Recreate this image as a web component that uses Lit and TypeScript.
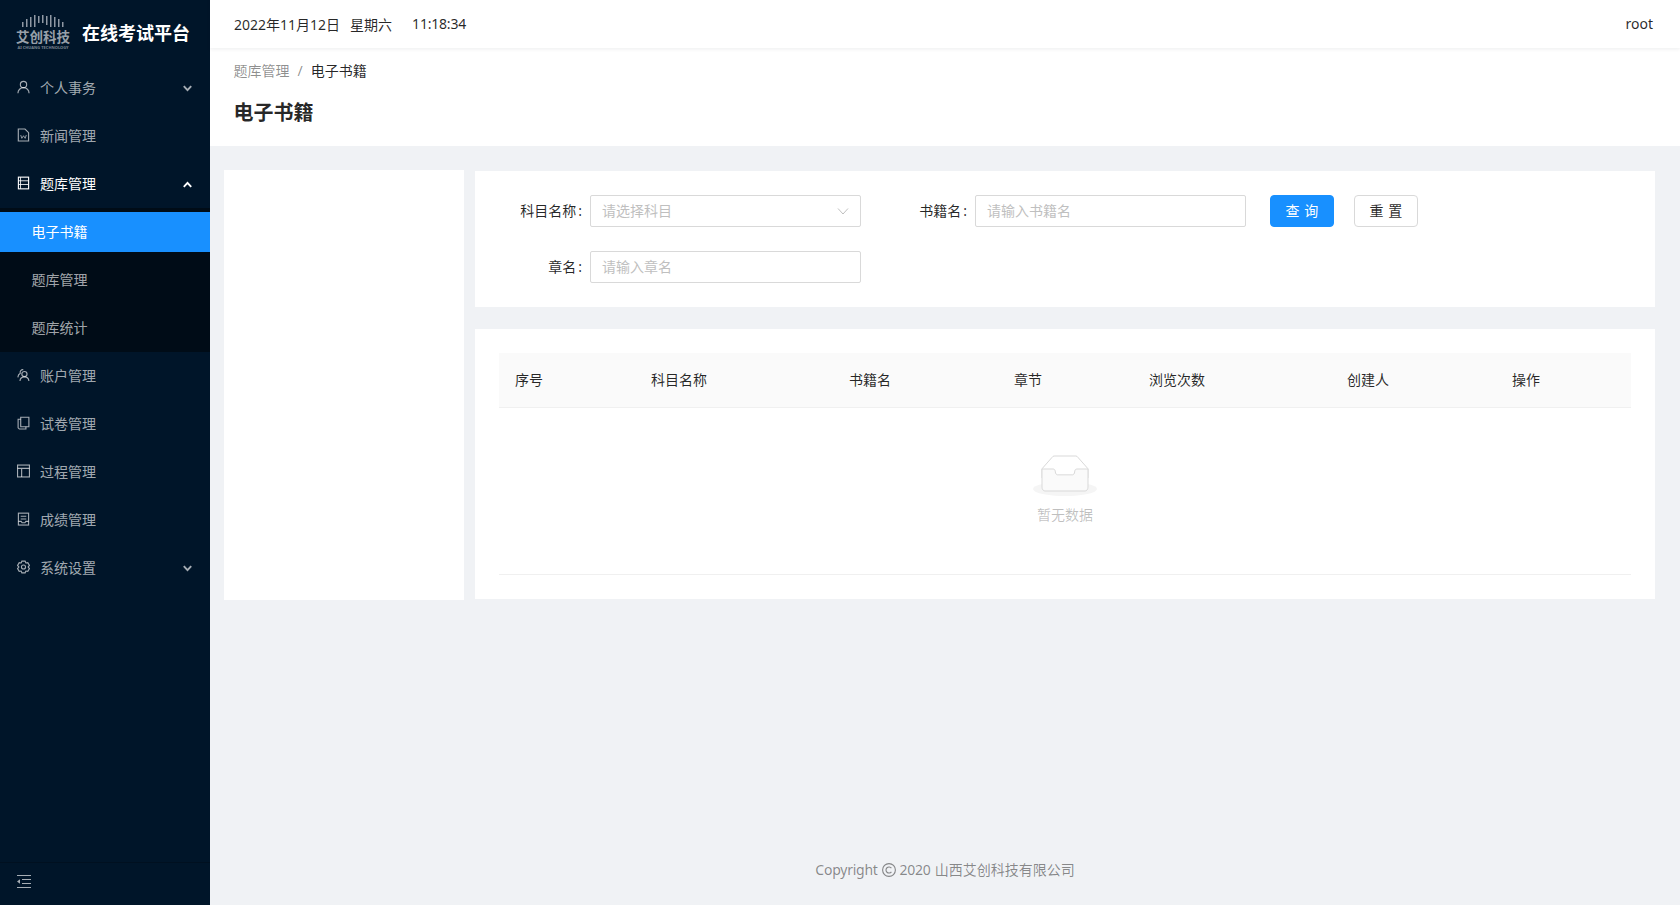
import { LitElement, html, css, svg } from "lit";
import { customElement } from "lit/decorators.js";

const gearPath = (() => {
  const pts: string[] = [];
  const cx = 7, cy = 7;
  for (let i = 0; i < 6; i++) {
    const a = (i * Math.PI) / 3 - Math.PI / 2;
    const w = 0.27;
    const out = 6.6, inn = 5;
    const p = (r: number, t: number) => `${(cx + r * Math.cos(t)).toFixed(2)} ${(cy + r * Math.sin(t)).toFixed(2)}`;
    pts.push(p(inn, a - 0.52), p(out, a - w), p(out, a + w), p(inn, a + 0.52));
  }
  return "M" + pts.join("L") + "Z";
})();

const icons: Record<string, unknown> = {
  user: svg`<circle cx="7" cy="4.3" r="3.4"/><path d="M1 13.6c0-3.3 2.7-5.9 6-5.9s6 2.6 6 5.9"/>`,
  word: svg`<path d="M1.4.6h7.2l3.9 3.9v8.9H1.4z"/><path d="M4 7l1.2 3.6L7 7.8l1.8 2.8L10 7" stroke-width=".9"/>`,
  book: svg`<rect x="1.500" y=".7" width="11" height="12.6"/><path d="M1.500 4.600h11M1.500 8.600h11M3.800.7v12.600" stroke-width=".9"/>`,
  account: svg`<circle cx="8" cy="6" r="2.8"/><path d="M3.2 13.4c.2-2.6 2.2-4.4 4.8-4.4s4.600 1.800 4.800 4.400"/><path d="M6.800 1.300a3 3 0 0 0-3.300 3.900c-1.400.9-2.400 2.500-2.600 4.300"/>`,
  paper: svg`<path d="M4 3H1.200v9.200l1.300 1.300H9.600V11"/><path d="M4 3V.800h8.800V11H4z"/>`,
  process: svg`<rect x=".6" y=".6" width="12.800" height="12.800"/><path d="M.6 4.200h12.800M5 4.200v9.200"/>`,
  score: svg`<rect x="1.500" y=".700" width="11" height="12.800"/><path d="M4 4h6M4 7h6M1.500 9.500h3l1 1.500h3l1-1.500h3"/>`,
  gear: svg`<path d="${gearPath}"/><circle cx="7" cy="7" r="2.200"/>`,
};

const menu = [
  { t: "个人事务", i: "user", arrow: "down" },
  { t: "新闻管理", i: "word" },
  { t: "题库管理", i: "book", arrow: "up", active: true },
  { sub: [{ t: "电子书籍", sel: true }, { t: "题库管理" }, { t: "题库统计" }] },
  { t: "账户管理", i: "account" },
  { t: "试卷管理", i: "paper" },
  { t: "过程管理", i: "process" },
  { t: "成绩管理", i: "score" },
  { t: "系统设置", i: "gear", arrow: "down" },
] as any[];

// [x, top, bottom] of each bar in the logo, in px
const bars = [
  [1, 8, 13], [5, 5, 13], [9, 3, 13], [13, 1, 13], [17, 2, 9], [21, 1, 9],
  [25, 2, 11], [29, 1, 13], [33, 3, 13], [37, 5, 13], [41, 8, 13],
];

@customElement("app-root")
export class AppRoot extends LitElement {
  static styles = css`
    :host {
      display: flex;
      width: 100%;
      height: 100vh;
      overflow: hidden;
      background: #f0f2f5;
      font-family: "Noto Sans", "Noto Sans CJK SC", sans-serif;
      font-size: 14px;
      color: rgba(0, 0, 0, 0.85);
    }
    * { box-sizing: border-box; }
    .side {
      width: 210px;
      flex: none;
      background: #001529;
      display: flex;
      flex-direction: column;
      color: rgba(255, 255, 255, 0.65);
    }
    .brand {
      height: 64px;
      flex: none;
      display: flex;
      align-items: center;
      padding: 0 0 0 16px;
      gap: 12px;
    }
    .logo {
      width: 54px;
      display: flex;
      flex-direction: column;
      align-items: center;
      color: #98a0a9;
    }
    .logo svg { display: block; }
    .logo-cn {
      font-size: 13.500px;
      line-height: 12px;
      font-weight: 700;
      white-space: nowrap;
      margin-top: 3px;
    }
    .logo-en {
      font-size: 4px;
      line-height: 5px;
      white-space: nowrap;
      font-weight: 700;
      opacity: 0.8;
      margin-top: 2px;
    }
    .brand-title {
      font-size: 18px;
      font-weight: 700;
      color: #fff;
      white-space: nowrap;
    }
    .nav { flex: 1; }
    .item {
      height: 48px;
      display: flex;
      align-items: center;
      padding: 0 0 2px 17px;
    }
    .item.active { color: #fff; }
    .item svg.ic {
      width: 13px;
      height: 14px;
      flex: none;
      margin-right: 10px;
      fill: none;
      stroke: currentColor;
      stroke-width: 1.200;
    }
    .arrow {
      width: 9px;
      height: 7px;
      margin: 2px 18.500px 0 auto;
      fill: none;
      stroke: currentColor;
      stroke-width: 1.900;
    }
    .sub { background: #000c17; padding: 4px 0; }
    .sub-item {
      height: 40px;
      display: flex;
      align-items: center;
      padding: 0 0 2px 31.5px;
      margin-bottom: 8px;
    }
    .sub-item:last-child { margin-bottom: 0; }
    .sub-item.sel { background: #1890ff; color: #fff; }
    .collapse {
      height: 43px;
      flex: none;
      border-top: 1px solid rgba(0, 0, 0, 0.22);
      display: flex;
      align-items: flex-start;
      padding: 12px 0 0 17px;
      color: rgba(255, 255, 255, 0.65);
    }
    .collapse svg { display: block; }
    .main {
      flex: 1;
      min-width: 0;
      display: flex;
      flex-direction: column;
    }
    .top {
      height: 48px;
      flex: none;
      background: #fff;
      box-shadow: 0 1px 4px rgba(0, 21, 41, 0.08);
      display: flex;
      align-items: center;
      padding: 0 27px 1px 24px;
      position: relative;
      z-index: 1;
    }
    .top-date { margin-right: 10px; }
    .top-week { margin-right: 20px; }
    .top-time { letter-spacing: -0.2px; }
    .top-user { margin-left: auto; }
    .page-head {
      height: 98px;
      flex: none;
      background: #fff;
      padding: 12px 24px 0 23.500px;
    }
    .crumb { display: flex; line-height: 22px; }
    .crumb .link { color: rgba(0, 0, 0, 0.45); }
    .crumb .sep { color: rgba(0, 0, 0, 0.45); margin: 0 8px; }
    .title {
      margin: 15px 0 0;
      font-size: 20px;
      line-height: 32px;
      font-weight: 700;
    }
    .body {
      flex: 1;
      display: flex;
      align-items: flex-start;
      padding: 24px 25px 0 14px;
      gap: 11px;
    }
    .tree { width: 240px; height: 430px; flex: none; background: #fff; }
    .right {
      flex: 1;
      min-width: 0;
      display: flex;
      flex-direction: column;
      gap: 22px;
      margin-top: 1px;
    }
    .form {
      background: #fff;
      padding: 24px 0;
      display: grid;
      grid-template-columns: 115px 271px 114px 271px 64px 64px;
      grid-auto-rows: 32px;
      row-gap: 24px;
      align-items: center;
    }
    .label { text-align: right; padding: 0 8px 2px 0; white-space: nowrap; }
    .label i { font-style: normal; margin-left: 2px; }
    .field {
      height: 32px;
      border: 1px solid #d9d9d9;
      border-radius: 2px;
      padding: 0 11px 2px;
      display: flex;
      align-items: center;
      justify-content: space-between;
      color: #bfbfbf;
      background: #fff;
    }
    .field svg { fill: none; stroke: rgba(0, 0, 0, 0.25); stroke-width: 1; margin-top: 2px; }
    .btn {
      height: 32px;
      border-radius: 4px;
      border: 1px solid #d9d9d9;
      display: flex;
      align-items: center;
      justify-content: center;
      background: #fff;
      padding-bottom: 2px;
    }
    .btn span { letter-spacing: 0.34em; margin-right: -0.34em; }
    .btn.primary {
      background: #1890ff;
      border-color: #1890ff;
      color: #fff;
      margin-left: 24px;
      width: 64px;
    }
    .btn.reset { width: 64px; margin-left: 44px; }
    .table-card {
      background: #fff;
      height: 270px;
      padding: 24px 24px 0;
    }
    .thead {
      height: 55px;
      background: #fafafa;
      border-bottom: 1px solid #f0f0f0;
      display: grid;
      grid-template-columns: 136px 198px 165px 135px 198px 165px 135px;
      align-items: center;
      padding-bottom: 3px;
    }
    .thead div { padding-left: 16px; }
    .empty {
      height: 167px;
      border-bottom: 1px solid #f0f0f0;
      display: flex;
      flex-direction: column;
      align-items: center;
      padding-top: 47px;
      color: rgba(0, 0, 0, 0.25);
    }
    .empty svg { display: block; }
    .empty-text { line-height: 22px; margin-top: 8px; }
    .foot {
      margin: 0 0 24px;
      flex: none;
      display: flex;
      justify-content: center;
      align-items: center;
      gap: 4px;
      line-height: 22px;
      color: rgba(0, 0, 0, 0.45);
    }
    .foot .latin { letter-spacing: -0.25px; }
    .foot svg { fill: none; stroke: currentColor; stroke-width: 1.100; display: block; }
  `;

  private renderArrow(dir: string) {
    return html`<svg class="arrow" viewBox="0 0 9 7"><path d=${dir === "up" ? "M.8 5.800L4.500 1.800 8.200 5.800" : "M.8 1.200L4.500 5.200 8.200 1.200"} /></svg>`;
  }

  private renderMenu(m: any) {
    if (m.sub) {
      return html`<div class="sub">
        ${m.sub.map((s: any) => html`<div class="sub-item ${s.sel ? "sel" : ""}">${s.t}</div>`)}
      </div>`;
    }
    return html`<div class="item ${m.active ? "active" : ""}">
      <svg class="ic" viewBox="0 0 14 14">${icons[m.i]}</svg>
      <span>${m.t}</span>
      ${m.arrow ? this.renderArrow(m.arrow) : ""}
    </div>`;
  }

  render() {
    return html`
      <aside class="side">
        <div class="brand">
          <div class="logo">
            <svg width="44" height="14" viewBox="0 0 44 14" fill="#8f98a3">
              ${bars.map(([x, a, b]) => svg`<rect x=${x} y=${a} width="1.500" height=${b - a} />`)}
            </svg>
            <div class="logo-cn">艾创科技</div>
            <div class="logo-en">AI CHUANG TECHNOLOGY</div>
          </div>
          <div class="brand-title">在线考试平台</div>
        </div>
        <nav class="nav">${menu.map((m) => this.renderMenu(m))}</nav>
        <div class="collapse">
          <svg width="14" height="14" viewBox="0 0 14 14" fill="currentColor">
            <rect x="0" y="0" width="14" height="1" />
            <rect x="5" y="4" width="9" height="1" />
            <rect x="5" y="8" width="9" height="1" />
            <rect x="0" y="12" width="14" height="1" />
            <path d="M3 4.200v4.600L0 6.500z" />
          </svg>
        </div>
      </aside>
      <div class="main">
        <header class="top">
          <span class="top-date">2022年11月12日</span>
          <span class="top-week">星期六</span>
          <span class="top-time">11:18:34</span>
          <span class="top-user">root</span>
        </header>
        <section class="page-head">
          <div class="crumb">
            <span class="link">题库管理</span><span class="sep">/</span><span>电子书籍</span>
          </div>
          <h1 class="title">电子书籍</h1>
        </section>
        <div class="body">
          <div class="tree"></div>
          <div class="right">
            <div class="form">
              <div class="label">科目名称<i>:</i></div>
              <div class="field">
                <span>请选择科目</span>
                <svg width="12" height="12" viewBox="0 0 12 12"><path d="M1 3.500l5 5.500 5-5.500" /></svg>
              </div>
              <div class="label">书籍名<i>:</i></div>
              <div class="field"><span>请输入书籍名</span></div>
              <div class="btn primary"><span>查询</span></div>
              <div class="btn reset"><span>重置</span></div>
              <div class="label">章名<i>:</i></div>
              <div class="field"><span>请输入章名</span></div>
            </div>
            <div class="table-card">
              <div class="thead">
                ${["序号", "科目名称", "书籍名", "章节", "浏览次数", "创建人", "操作"].map((c) => html`<div>${c}</div>`)}
              </div>
              <div class="empty">
                <svg width="64" height="41" viewBox="0 0 64 41">
                  <g transform="translate(0 1)" fill="none" fill-rule="evenodd">
                    <ellipse fill="#f5f5f5" cx="32" cy="33" rx="32" ry="7" />
                    <g fill-rule="nonzero" stroke="#d9d9d9">
                      <path d="M55 12.760L44.854 1.258C44.367.474 43.656 0 42.907 0H21.093c-.749 0-1.460.474-1.947 1.257L9 12.761V22h46v-9.240z" />
                      <path d="M41.613 15.931c0-1.605.994-2.930 2.227-2.931H55v18.137C55 33.260 53.680 35 52.050 35h-40.100C10.320 35 9 33.259 9 31.137V13h11.160c1.233 0 2.227 1.323 2.227 2.928v.022c0 1.605 1.005 2.901 2.237 2.901h14.752c1.232 0 2.237-1.308 2.237-2.913v-.007z" fill="#fafafa" />
                    </g>
                  </g>
                </svg>
                <div class="empty-text">暂无数据</div>
              </div>
            </div>
          </div>
        </div>
        <footer class="foot">
          <span class="latin">Copyright</span>
          <svg width="14" height="14" viewBox="0 0 14 14" aria-hidden="true"><circle cx="7" cy="7" r="6.400" /><path d="M9.400 5.200A3 3 0 1 0 9.400 8.800" /></svg>
          <span class="latin">2020</span>
          <span>山西艾创科技有限公司</span>
        </footer>
      </div>
    `;
  }
}
